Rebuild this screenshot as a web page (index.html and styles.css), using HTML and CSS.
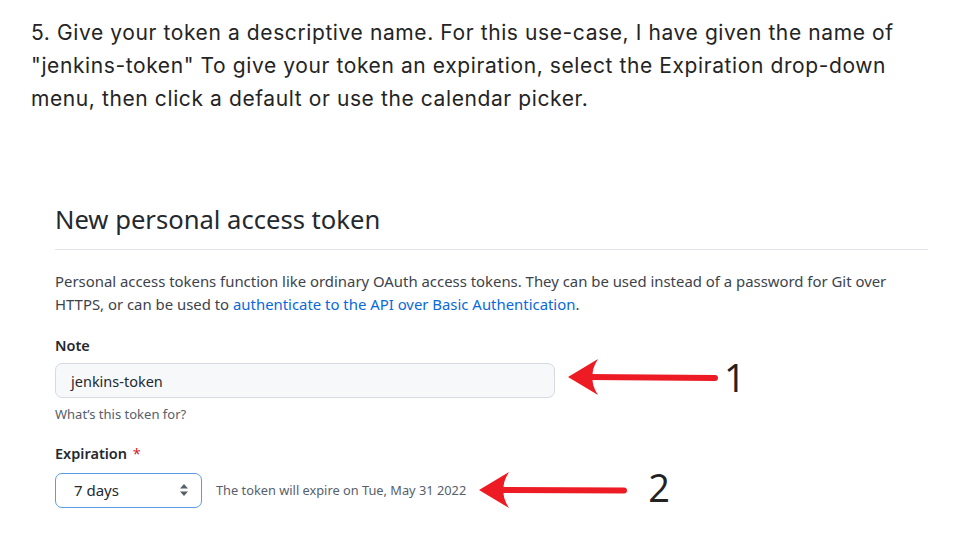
FILE: index.html
```html
<!DOCTYPE html>
<html lang="en">
<head>
<meta charset="utf-8">
<title>New personal access token</title>
<link rel="stylesheet" href="styles.css">
</head>
<body>
<p class="step">5. Give your token a descriptive name. For this use-case, I have given the name of<br>"jenkins-token" To give your token an expiration, select the Expiration drop-down<br>menu, then click a default or use the calendar picker.</p>

<section class="gh">
  <h2 class="gh-title">New personal access token</h2>
  <p class="gh-desc">Personal access tokens function like ordinary OAuth access tokens. They can be used instead of a password for Git over<br>HTTPS, or can be used to <a class="gh-link" href="#">authenticate to the API over Basic Authentication</a>.</p>

  <div class="field">
    <label class="field-label">Note</label>
    <div class="field-row">
      <div class="gh-input">jenkins-token</div>
      <svg class="arrow arrow-1" width="152" height="38" viewBox="0 0 152 38"><path d="M0 19 L30 1 Q23 12 25 19 Q23 26 30 37 Z" fill="#ed1c24"/><line x1="20" y1="19" x2="147" y2="20" stroke="#ed1c24" stroke-width="6" stroke-linecap="round"/></svg>
      <span class="callout callout-1">1</span>
    </div>
    <p class="field-hint">What’s this token for?</p>
  </div>

  <div class="field">
    <label class="field-label">Expiration <span class="req">*</span></label>
    <div class="field-row">
      <div class="gh-select">7 days
        <svg class="select-caret" width="10" height="14" viewBox="0 0 10 14"><path d="M5 1 L9 5.5 H1 Z M5 13 L9 8.5 H1 Z" fill="#57606a"/></svg>
      </div>
      <span class="expire-note">The token will expire on Tue, May 31 2022</span>
      <svg class="arrow arrow-2" width="150" height="38" viewBox="0 0 150 38"><path d="M0 19 L30 1 Q23 12 25 19 Q23 26 30 37 Z" fill="#ed1c24"/><line x1="20" y1="19" x2="145" y2="19.5" stroke="#ed1c24" stroke-width="6" stroke-linecap="round"/></svg>
      <span class="callout callout-2">2</span>
    </div>
  </div>
</section>
</body>
</html>
```

FILE: styles.css
```css
html, body {
  margin: 0;
  padding: 0;
  background: #ffffff;
}

.step {
  margin: 0;
  padding: 16px 0 0 31px;
  font-family: Inter, "Liberation Sans", sans-serif;
  font-size: 21px;
  line-height: 33px;
  color: #242424;
  letter-spacing: 0.6px;
}

.gh {
  margin: 87px 0 0 55px;
  width: 873px;
  font-family: "Noto Sans", "Open Sans", sans-serif;
  color: #24292f;
}

.gh-title {
  margin: 0;
  padding-bottom: 11px;
  border-bottom: 1px solid #e1e4e8;
  font-size: 25.6px;
  font-weight: 400;
  line-height: 36px;
  color: #24292f;
}

.gh-desc {
  margin: 20px 0 0;
  font-size: 14.9px;
  line-height: 23px;
  color: #3d434b;
}

.gh-link {
  color: #0969da;
  text-decoration: none;
}

.field {
  margin-top: 19px;
}

.field + .field {
  margin-top: 20px;
}

.field-label {
  display: block;
  font-size: 14.5px;
  font-weight: 600;
  line-height: 20px;
  margin-bottom: 8px;
}

.req {
  color: #cf222e;
  font-weight: 400;
  margin-left: 2px;
}

.field-row {
  display: flex;
  align-items: center;
}

.gh-input {
  box-sizing: border-box;
  width: 500px;
  height: 35px;
  padding: 0 15px;
  display: flex;
  align-items: center;
  background: #f6f8fa;
  border: 1px solid #d6dbe1;
  border-radius: 7px;
  font-size: 14.5px;
  color: #24292f;
}

.arrow-1 {
  margin-left: 13px;
  margin-top: -7px;
}

.callout {
  font-family: "Open Sans", "Noto Sans", sans-serif;
  font-size: 38px;
  line-height: 38px;
  color: #222222;
}

.callout-1 {
  margin-left: 4px;
  margin-top: -8px;
}

.field-hint {
  margin: 8px 0 0;
  font-size: 13px;
  line-height: 17px;
  color: #57606a;
}

.gh-select {
  box-sizing: border-box;
  width: 147px;
  height: 35px;
  padding: 0 12px 0 18px;
  display: flex;
  align-items: center;
  justify-content: space-between;
  border: 1px solid #5b9be6;
  border-radius: 7px;
  font-size: 15px;
  color: #24292f;
}

.expire-note {
  margin-left: 14px;
  font-size: 12.8px;
  color: #57606a;
}

.arrow-2 {
  margin-left: 13px;
}

.callout-2 {
  margin-left: 19px;
  margin-top: -6px;
}
```
